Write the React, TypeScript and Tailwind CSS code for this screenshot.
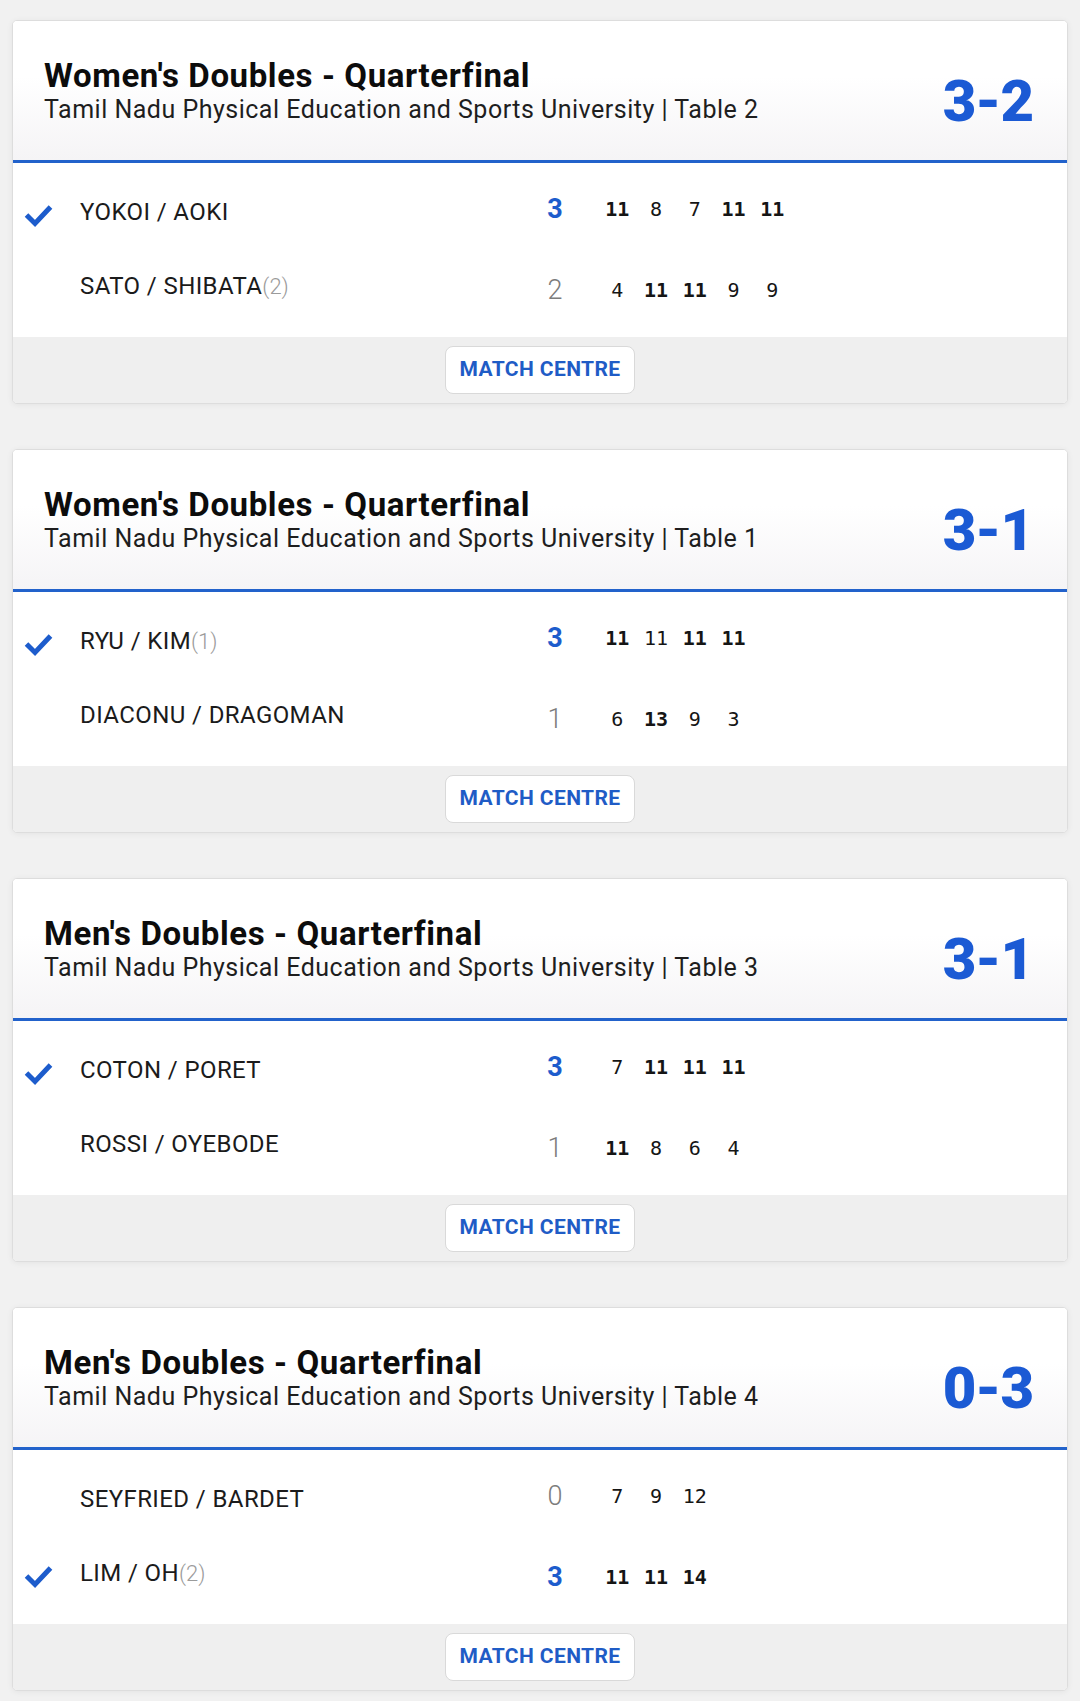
import React from 'react';

type Side = {
  name: string;
  seed?: number;
  sets: number;
  games: number[];
  won: boolean;
};

type Match = {
  title: string;
  table: number;
  left: number;
  right: number;
  top: Side;
  bottom: Side;
};

const matches: Match[] = [
  {
    title: "Women's Doubles - Quarterfinal",
    table: 2,
    left: 3,
    right: 2,
    top: { name: 'YOKOI / AOKI', sets: 3, games: [11, 8, 7, 11, 11], won: true },
    bottom: { name: 'SATO / SHIBATA', seed: 2, sets: 2, games: [4, 11, 11, 9, 9], won: false },
  },
  {
    title: "Women's Doubles - Quarterfinal",
    table: 1,
    left: 3,
    right: 1,
    top: { name: 'RYU / KIM', seed: 1, sets: 3, games: [11, 11, 11, 11], won: true },
    bottom: { name: 'DIACONU / DRAGOMAN', sets: 1, games: [6, 13, 9, 3], won: false },
  },
  {
    title: "Men's Doubles - Quarterfinal",
    table: 3,
    left: 3,
    right: 1,
    top: { name: 'COTON / PORET', sets: 3, games: [7, 11, 11, 11], won: true },
    bottom: { name: 'ROSSI / OYEBODE', sets: 1, games: [11, 8, 6, 4], won: false },
  },
  {
    title: "Men's Doubles - Quarterfinal",
    table: 4,
    left: 0,
    right: 3,
    top: { name: 'SEYFRIED / BARDET', sets: 0, games: [7, 9, 12], won: false },
    bottom: { name: 'LIM / OH', seed: 2, sets: 3, games: [11, 11, 14], won: true },
  },
];

const Check = () => (
  <svg width="29" height="24" viewBox="0 0 29 24" className="mt-[7px]">
    <polyline points="2.5,11 11,19.5 26.5,3" fill="none" stroke="#1d5ccc" strokeWidth="5" strokeLinejoin="miter" />
  </svg>
);

const Row = ({ side, other, first }: { side: Side; other: Side; first: boolean }) => (
  <div className="flex h-[40px] items-center">
    <div className="w-[29px] ml-[11px] flex justify-center">{side.won && <Check />}</div>
    <div className="ml-[27px] w-[460px] text-[24px] leading-[40px] tracking-[0.4px] text-[#1b1b1b]">
      {side.name}
      {side.seed !== undefined && (
        <span className="text-[22px] font-light text-[#9b9b9b] tracking-normal">({side.seed})</span>
      )}
    </div>
    <div className={`flex items-center ${first ? 'mb-[7px]' : 'mt-[8px]'}`}>
      <div
        className={`w-[30px] text-center text-[27px] leading-[32px] ${
          side.won ? 'font-bold text-[#1d5ccc]' : 'font-light text-[#7c7c7c]'
        }`}
      >
        {side.sets}
      </div>
      <div className="ml-[28px] flex font-['DejaVu_Sans_Mono',monospace] text-[20px] leading-[24px] text-[#151515]">
        {side.games.map((g, i) => (
          <div key={i} className={`w-[38.75px] text-center ${g > other.games[i] ? 'font-bold' : 'font-normal'}`}>
            {g}
          </div>
        ))}
      </div>
    </div>
  </div>
);

const Card = ({ m }: { m: Match }) => (
  <div className="h-[384px] rounded-[5px] border border-[#dddddd] bg-white overflow-hidden flex flex-col shadow-[0_1px_6px_rgba(0,0,0,0.06)]">
    <div className="h-[139px] flex justify-between items-start pl-[31px] pr-[34px] pt-[35px] bg-gradient-to-b from-white from-40% to-[#f5f4f6]">
      <div>
        <div className="text-[33px] leading-[39px] font-bold text-[#0c0c0c] tracking-[0.6px]">{m.title}</div>
        <div className="text-[25px] leading-[30px] text-[#1e1e1e] tracking-[0.5px]">
          Tamil Nadu Physical Education and Sports University | Table {m.table}
        </div>
      </div>
      <div className="mt-[16px] text-[58px] leading-[58px] font-black text-[#1b5ad4] tracking-[-1px]">
        {m.left}-{m.right}
      </div>
    </div>
    <div className="h-[3px] bg-[#2262cb]" />
    <div className="h-[174px] pt-[29px] flex flex-col gap-[34px]">
      <Row side={m.top} other={m.bottom} first />
      <Row side={m.bottom} other={m.top} first={false} />
    </div>
    <div className="flex-1 bg-[#efefef] flex items-center justify-center">
      <div className="w-[190px] h-[48px] rounded-[8px] border border-[#d9d9d9] bg-white flex items-center justify-center text-[21px] font-bold tracking-[0.4px] text-[#1f5cc6]">
        MATCH CENTRE
      </div>
    </div>
  </div>
);

export default function App() {
  return (
    <div className="min-h-screen bg-[#f1f1f1] px-[12px] pt-[20px] pb-[9px] flex flex-col gap-[45px] font-['Roboto','Liberation_Sans',sans-serif]">
      {matches.map((m, i) => (
        <Card key={i} m={m} />
      ))}
    </div>
  );
}
